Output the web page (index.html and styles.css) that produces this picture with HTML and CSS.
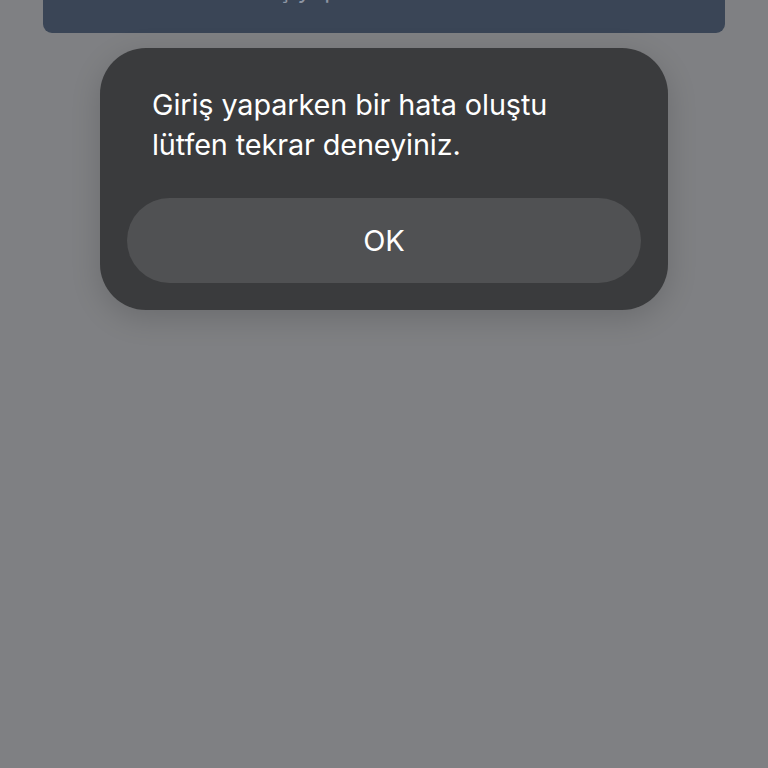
FILE: index.html
```html
<!DOCTYPE html>
<html lang="tr">
<head>
<meta charset="utf-8">
<link rel="stylesheet" href="styles.css">
</head>
<body>
<div class="screen">
  <div class="topbar"><span class="topbar-text">Giriş yap</span></div>
  <div class="dialog">
    <p class="message">Giriş yaparken bir hata oluştu lütfen tekrar deneyiniz.</p>
    <div class="btn">OK</div>
  </div>
</div>
</body>
</html>
```
FILE: styles.css
```css
html, body {
  margin: 0;
  padding: 0;
}
body {
  width: 768px;
  height: 768px;
  background: #7f8083;
  font-family: Inter, "Noto Sans", sans-serif;
  overflow: hidden;
}
.screen {
  display: flex;
  flex-direction: column;
  align-items: center;
}
.topbar {
  width: 682px;
  height: 33px;
  background: #3a4556;
  border-radius: 0 0 9px 9px;
  overflow: hidden;
  display: flex;
  justify-content: center;
  align-items: flex-start;
}
.topbar-text {
  color: #8d95a3;
  font-size: 24px;
  line-height: 24px;
  margin-top: -22px;
  margin-right: 190px;
}
.dialog {
  margin-top: 15px;
  width: 568px;
  box-sizing: border-box;
  background: #3a3b3d;
  border-radius: 46px;
  padding: 37px 27px 27px 27px;
  box-shadow: 0 8px 30px rgba(0,0,0,0.16);
}
.message {
  margin: 0 0 0 25px;
  color: #ffffff;
  font-size: 28.8px;
  line-height: 40px;
  letter-spacing: -0.1px;
  width: 460px;
}
.btn {
  margin-top: 33px;
  height: 85px;
  border-radius: 43px;
  background: #505153;
  color: #ffffff;
  font-size: 29px;
  display: flex;
  align-items: center;
  justify-content: center;
}
```
